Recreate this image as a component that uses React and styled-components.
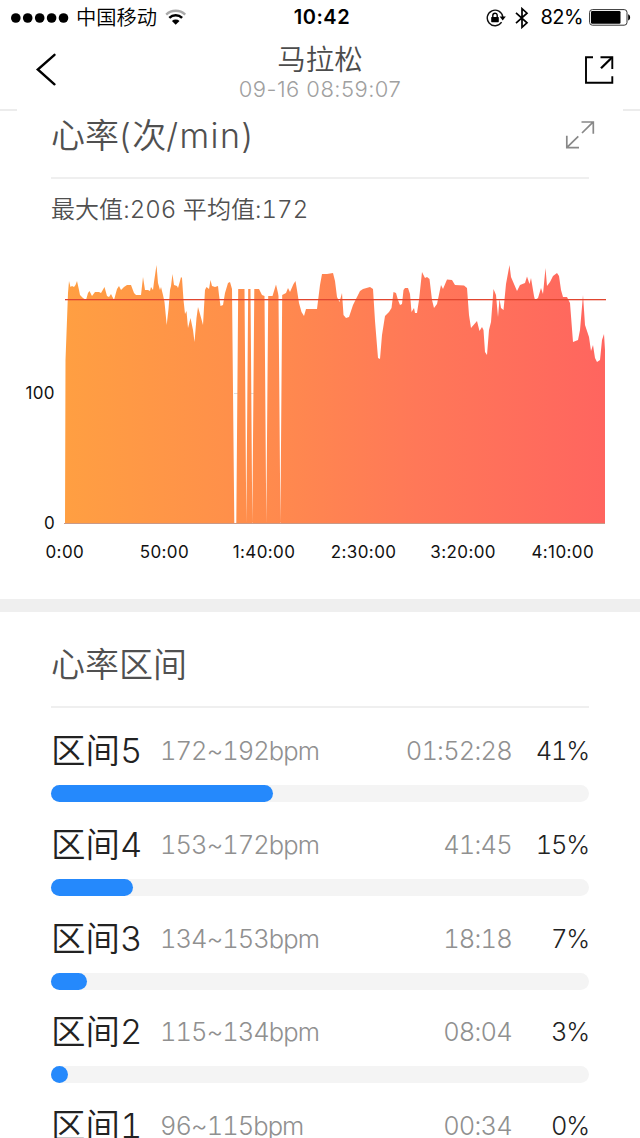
import React from 'react';
import styled, { createGlobalStyle } from 'styled-components';

const GlobalStyle = createGlobalStyle`
  * {
    box-sizing: border-box;
  }

  body {
    margin: 0;
    background: #fff;
    font-family: Inter, 'Noto Sans CJK SC', sans-serif;
    font-weight: 300;
    overflow: hidden;
  }

  svg {
    display: block;
    flex: none;
  }
`;

const Screen = styled.div`
  width: 640px;
  height: 1138px;
  overflow: hidden;
  background: #fff;
`;

const StatusBar = styled.div`
  display: grid;
  grid-template-columns: 1fr auto 1fr;
  align-items: center;
  height: 35px;
  margin-bottom: 1px;
  padding: 0 9px 0 11px;
  color: #000;
`;

const StatusGroup = styled.div`
  display: flex;
  align-items: center;
  gap: ${(props) => props.$gap || 0}px;
  justify-content: ${(props) => (props.$end ? 'flex-end' : 'flex-start')};
`;

const Carrier = styled.span`
  margin: 1px 8px 0 7px;
  font-size: 20.3px;
  font-weight: 350;
  line-height: 34px;
`;

const Clock = styled.span`
  padding-left: 2px;
  font-size: 20px;
  font-weight: 600;
  letter-spacing: 0.5px;
  line-height: 35px;
`;

const BatteryText = styled.span`
  margin: 0 -3px 0 3px;
  font-size: 20px;
  font-weight: 400;
  letter-spacing: -0.6px;
  line-height: 35px;
`;

const NavBar = styled.div`
  display: flex;
  justify-content: space-between;
  height: 75px;
  padding: 0 26px 0 35px;
  border-bottom: 2px solid #ececec;
`;

const NavButton = styled.button`
  display: flex;
  justify-content: ${(props) => (props.$end ? 'flex-end' : 'flex-start')};
  width: 60px;
  height: 40px;
  margin-top: 14px;
  padding: 0;
  border: none;
  background: none;
`;

const NavTitle = styled.div`
  padding: 8px 9px 0 0;
  text-align: center;
`;

const Title = styled.div`
  font-size: 28.5px;
  font-weight: 350;
  line-height: 32px;
  color: #4c4c4c;
`;

const Subtitle = styled.div`
  font-size: 22px;
  line-height: 26px;
  letter-spacing: 0.45px;
  color: #a0a0a0;
`;

const Card = styled.div`
  height: ${(props) => props.$height}px;
  margin: ${(props) => props.$top || 0}px 17px 0;
  padding: 0 34px;
  background: #fff;
`;

const CardHeader = styled.div`
  display: flex;
  justify-content: space-between;
  height: ${(props) => props.$height}px;
  padding-top: ${(props) => props.$pad}px;
  border-bottom: 2px solid #efefef;
`;

const Heading = styled.h2`
  margin: 0;
  font-size: 34px;
  font-weight: 350;
  line-height: 40px;
  color: #505050;
`;

const Latin = styled.span`
  font-weight: 300;
  letter-spacing: 1.4px;
`;

const ExpandButton = styled.button`
  height: 28px;
  margin: 5px -6px 0 0;
  padding: 0;
  border: none;
  background: none;
`;

const Summary = styled.div`
  margin-top: 17px;
  font-size: 24px;
  font-weight: 350;
  font-variant-numeric: tabular-nums;
  line-height: 28px;
  letter-spacing: 0.05px;
  color: #505050;
`;

const ChartArea = styled.div`
  display: flex;
  height: 281px;
`;

const YAxis = styled.div`
  display: flex;
  flex-direction: column;
  justify-content: flex-end;
  gap: 106px;
  width: 64px;
  padding-right: 9px;
  margin-bottom: -4px;
  text-align: right;
`;

const AxisLabel = styled.span`
  font-size: 17px;
  font-weight: 400;
  line-height: 24px;
  letter-spacing: 0.4px;
  color: #111;
`;

const XAxis = styled.div`
  display: grid;
  grid-template-columns: repeat(6, 99.6px);
  height: 68px;
  padding: 9px 0 0 15px;
  text-align: center;
`;

const Divider = styled.div`
  height: 13px;
  background: #efefef;
`;

const Zone = styled.div`
  height: 93.8px;
  padding-top: 23px;
`;

const ZoneInfo = styled.div`
  display: flex;
  align-items: center;
  height: 40px;
  margin-bottom: 14px;
  font-variant-numeric: tabular-nums;
`;

const ZoneName = styled.span`
  width: 109px;
  font-size: 34.5px;
  font-weight: 350;
  line-height: 40px;
  color: #222;
  white-space: nowrap;
`;

const ZoneRange = styled.span`
  flex: 1;
  font-size: 25.5px;
  line-height: 40px;
  letter-spacing: -0.95px;
  color: #909090;
`;

const ZoneTime = styled.span`
  font-size: 25.5px;
  line-height: 40px;
  letter-spacing: -0.8px;
  color: #909090;
`;

const ZonePercent = styled.span`
  width: 77px;
  font-size: 25.5px;
  line-height: 40px;
  letter-spacing: -1.2px;
  text-align: right;
  color: #222;
`;

const Track = styled.div`
  height: 17px;
  border-radius: 9px;
  background: #f4f4f4;
`;

const Fill = styled.div`
  height: 17px;
  border-radius: 9px;
  background: #2589fc;
`;

// chart outline, x and y in screen units
const heartRate = `65,523 65.5,360 68,293 69,281 70.5,287 72,286 74,287 75.5,285 77,281 79,290 80,295 83,298
86,300 88,293 89.5,291 92,296 95,292 99,292 101,293 104.5,287 107,296 109,297 111,294 114,300 117,289 119,286
121,290 124,287 127,285 131,285 134,293 136,295 141,295 143,277 145,290 148,290 150,291 151,287 153,290 154,282
156.5,265 158,283 160,290 161,287 163,295 164.5,302 166.7,325 168.5,309 170,290 171,286 172.5,274 174,285
177,286 178,288 180,281 181,277 182,278 183.5,300 185,314 186.5,311 188,328 190.5,318 193,330 194.5,342
196.5,318 198,307 200,314 203,325 205,290 206.5,287 209,289 210.5,280 212,286 215,287 218,286 219,295 220.5,306
223,305 225,293 228,283 230,282 232,289 232.8,370 234.3,523 236.3,523 238.2,289 244.5,289 246.3,523 248.2,289
250.5,289 252.3,523 254.3,289 259,289 262,295 264.5,296 266.3,523 268.2,296 272.5,296 276,284.5 278,293
278.5,296 280.4,523 282.2,295 286,293 288,288 290,292 293.5,284 295.5,281 297,290 299,303 301.5,312 304,316
306,309 317,309 320,285 322,274 327,274 333,273 335,281 337,297 339.5,302 342,293 343.5,315 346,318 349,317
353,305 357,297 360,291 363,289 370,287 373,289 375,321 378,358 380,359 382,335 385,316 389,312 391.5,308
393.5,292 396,293 398,300 400,305 402,304 403.5,290 405,288 408,288 410,294 411.5,312 414,308 415,313 417,313
419,300 422,272 425,278 427,277 429.5,279 432,300 434,308 437,304 441,285 443,289 447,279.5 452,280 455,285
464,285.5 467,288 469,315 471,328 477,321 479.5,331 482,327 483.5,330 485,352 487,355 489,330 491,322 493.5,289
496,295 498,317 499.5,299 501,308 503.5,310 506,284 509.5,265 511,277 517,291 520,285 525,283 527,276.5
529.5,284 531,278 534,296 535,300 538,298 541,288 543,294 545.5,268 547,286 550,282 553,276 557,273 559,276
561,290 563,297 567,297 570,303 573,342 578,340 580,330 583,295 585,325 589,337 591,351 593,345 595,358 597,362
600,360 602,340 604,334 605,350 605,523`;

const zones = [
  { name: '区间5', range: '172~192bpm', time: '01:52:28', percent: 41, bar: 222 },
  { name: '区间4', range: '153~172bpm', time: '41:45', percent: 15, bar: 82 },
  { name: '区间3', range: '134~153bpm', time: '18:18', percent: 7, bar: 36 },
  { name: '区间2', range: '115~134bpm', time: '08:04', percent: 3, bar: 17 },
  { name: '区间1', range: '96~115bpm', time: '00:34', percent: 0, bar: 0 },
];

const times = ['0:00', '50:00', '1:40:00', '2:30:00', '3:20:00', '4:10:00'];

const SignalDots = () => (
  <svg width="58" height="10" viewBox="0 0 58 10">
    {[4.8, 16.7, 28.7, 40.6, 52.5].map((x) => (
      <circle key={x} cx={x} cy="5" r="4.8" />
    ))}
  </svg>
);

const WifiIcon = () => (
  <svg width="22" height="18" viewBox="0 0 22 18" fill="none">
    <path d="M1.2 5.6a13.8 13.8 0 0 1 19 0" stroke="#aaa" strokeWidth="2.4" />
    <path d="M4.3 8.9a9.2 9.2 0 0 1 12.8 0" stroke="#000" strokeWidth="2.5" />
    <path d="M6.9 12a5.6 5.6 0 0 1 7.6 0L10.7 15.8z" fill="#000" />
  </svg>
);

const LockIcon = () => (
  <svg width="20" height="18" viewBox="0 0 20 18" fill="none">
    <path d="M15.6 13.2A7.8 7.8 0 1 1 16.8 8" stroke="#111" strokeWidth="1.4" />
    <path d="M13.6 7.6h6.2l-3.1 3.8z" fill="#000" />
    <rect x="5.2" y="8" width="7.6" height="5.2" rx="0.6" fill="#000" />
    <path d="M6.8 8V6.4a2.2 2.2 0 0 1 4.4 0V8" stroke="#000" strokeWidth="1.4" />
  </svg>
);

const BluetoothIcon = () => (
  <svg width="14" height="22" viewBox="0 0 14 22" fill="none" stroke="#000" strokeWidth="1.7">
    <path d="M1 5.8 12 15.8 7 20.3V1.7l5 4.5L1 16.2" />
  </svg>
);

const BatteryIcon = () => (
  <svg width="42" height="17" viewBox="0 0 42 17">
    <rect x="0.6" y="0.6" width="37.4" height="15.6" rx="2.8" fill="none" stroke="#333" strokeWidth="1" />
    <rect x="2" y="2" width="29.5" height="12.8" rx="1.2" />
    <path d="M39.2 5.3c2.6 0.8 2.6 5.5 0 6.2z" />
  </svg>
);

const BackIcon = () => (
  <svg width="24" height="40" viewBox="0 0 24 40" fill="none">
    <path d="M19.5 4.8 2.8 19.5 19.5 34.3" stroke="#000" strokeWidth="2.4" strokeLinecap="round" />
  </svg>
);

const ShareIcon = () => (
  <svg width="29" height="40" viewBox="0 0 29 40" fill="none" stroke="#000" strokeWidth="1.9">
    <path d="M8 7.2H1V32.8H27.3V26.2" />
    <path d="M15.5 7.2H27.3V19" />
    <path d="M27 7.5 16 18.3" strokeWidth="2.3" />
  </svg>
);

const ExpandIcon = () => (
  <svg width="30" height="28" viewBox="0 0 30 28" fill="none" stroke="#888" strokeWidth="1.7">
    <path d="M16.5 1H28.3V12.8M28 1.2 17 12" />
    <path d="M1.8 14.8V26.6H14M2 26.4 13.3 15.4" />
  </svg>
);

const HeartChart = () => (
  <svg width="544" height="281" viewBox="64 250 544 281">
    <defs>
      <linearGradient id="heat" x1="65" x2="605" y1="0" y2="0" gradientUnits="userSpaceOnUse">
        <stop offset="0" stopColor="#ff9f42" />
        <stop offset="0.3" stopColor="#ff904a" />
        <stop offset="0.65" stopColor="#ff7858" />
        <stop offset="1" stopColor="#ff655f" />
      </linearGradient>
    </defs>
    <rect x="234" y="393" width="4" height="1" fill="#ddd" />
    <rect x="249" y="393" width="5" height="1" fill="#ddd" />
    <polygon points={heartRate} fill="url(#heat)" />
    <rect x="65" y="299" width="541" height="1.3" fill="#e0452f" />
    <rect x="64" y="523" width="541" height="1" fill="#c99a88" />
  </svg>
);

const App = () => {
  return (
    <>
      <GlobalStyle />
      <Screen>
        <StatusBar>
          <StatusGroup>
            <SignalDots />
            <Carrier>中国移动</Carrier>
            <WifiIcon />
          </StatusGroup>
          <Clock>10:42</Clock>
          <StatusGroup $end $gap={9}>
            <LockIcon />
            <BluetoothIcon />
            <BatteryText>82%</BatteryText>
            <BatteryIcon />
          </StatusGroup>
        </StatusBar>

        <NavBar>
          <NavButton>
            <BackIcon />
          </NavButton>
          <NavTitle>
            <Title>马拉松</Title>
            <Subtitle>09-16 08:59:07</Subtitle>
          </NavTitle>
          <NavButton $end>
            <ShareIcon />
          </NavButton>
        </NavBar>

        <Card $top={-2} $height={141}>
          <CardHeader $height={70} $pad={7}>
            <Heading>
              心率<Latin>(</Latin>次<Latin>/min)</Latin>
            </Heading>
            <ExpandButton>
              <ExpandIcon />
            </ExpandButton>
          </CardHeader>
          <Summary>最大值:206 平均值:172</Summary>
        </Card>
        <ChartArea>
          <YAxis>
            <AxisLabel>100</AxisLabel>
            <AxisLabel>0</AxisLabel>
          </YAxis>
          <HeartChart />
        </ChartArea>
        <XAxis>
          {times.map((time) => (
            <AxisLabel key={time}>{time}</AxisLabel>
          ))}
        </XAxis>

        <Divider />

        <Card $height={526}>
          <CardHeader $height={96} $pad={33}>
            <Heading>心率区间</Heading>
          </CardHeader>
          {zones.map((zone) => (
            <Zone key={zone.name}>
              <ZoneInfo>
                <ZoneName>{zone.name}</ZoneName>
                <ZoneRange>{zone.range}</ZoneRange>
                <ZoneTime>{zone.time}</ZoneTime>
                <ZonePercent>{zone.percent}%</ZonePercent>
              </ZoneInfo>
              <Track>
                <Fill style={{ width: zone.bar }} />
              </Track>
            </Zone>
          ))}
        </Card>
      </Screen>
    </>
  );
};

export default App;
